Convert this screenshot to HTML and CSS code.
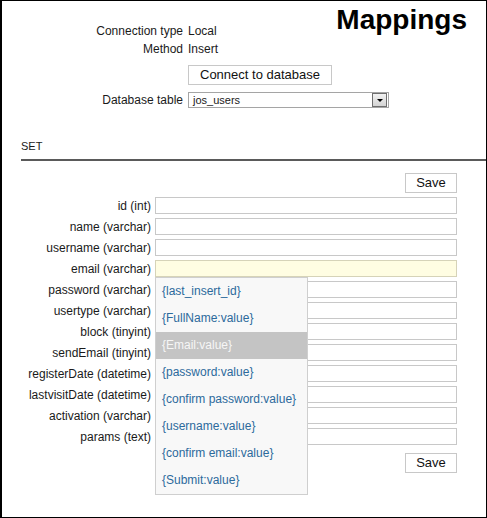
FILE: index.html
```html
<!DOCTYPE html>
<html>
	<head>
		<meta charset="utf-8">
		<title>Mappings</title>
		<link rel="stylesheet" href="styles.css">
	</head>
	<body>
		<div id="frame">
			<div class="head">
				<h1 class="title">Mappings</h1>
				<div class="info">
					<div class="row"><span class="lbl">Connection type</span><span class="val">Local</span></div>
					<div class="row"><span class="lbl">Method</span><span class="val">Insert</span></div>
					<div class="row btn-row"><span class="lbl"></span><button class="btn connect">Connect to database</button></div>
					<div class="row sel-row">
						<span class="lbl">Database table</span>
						<div class="select">
							<span class="sel-text">jos_users</span>
							<span class="sel-arrow"></span>
						</div>
					</div>
				</div>
			</div>

			<div class="set">SET</div>
			<div class="rule"></div>

			<div class="map">
				<div class="save-row"><button class="btn save">Save</button></div>
				<div class="field"><label>id (int)</label><input type="text"></div>
				<div class="field"><label>name (varchar)</label><input type="text"></div>
				<div class="field"><label>username (varchar)</label><input type="text"></div>
				<div class="field"><label>email (varchar)</label><input type="text" class="focus">
					<ul class="suggest">
						<li>{last_insert_id}</li>
						<li>{FullName:value}</li>
						<li class="on">{Email:value}</li>
						<li>{password:value}</li>
						<li>{confirm password:value}</li>
						<li>{username:value}</li>
						<li>{confirm email:value}</li>
						<li>{Submit:value}</li>
					</ul>
				</div>
				<div class="field"><label>password (varchar)</label><input type="text"></div>
				<div class="field"><label>usertype (varchar)</label><input type="text"></div>
				<div class="field"><label>block (tinyint)</label><input type="text"></div>
				<div class="field"><label>sendEmail (tinyint)</label><input type="text"></div>
				<div class="field"><label>registerDate (datetime)</label><input type="text"></div>
				<div class="field"><label>lastvisitDate (datetime)</label><input type="text"></div>
				<div class="field"><label>activation (varchar)</label><input type="text"></div>
				<div class="field"><label>params (text)</label><input type="text"></div>
				<div class="save-row bottom"><button class="btn save">Save</button></div>
			</div>
		</div>
	</body>
</html>
```

FILE: styles.css
```css
* {
	margin: 0;
	padding: 0;
	box-sizing: border-box;
}
body {
	font-family: "Liberation Sans", Arial, sans-serif;
	font-size: 12px;
	color: #1a1a1a;
	background: #fff;
}
#frame {
	width: 487px;
	height: 518px;
	border: 1px solid #000;
	border-left-width: 2px;
	overflow: hidden;
}

/* header */
.title {
	float: right;
	margin: 3px 19px 0 0;
	font-size: 28px;
	line-height: 32px;
	font-weight: bold;
	color: #000;
}
.info {
	padding-top: 21px;
}
.row {
	display: flex;
	align-items: center;
	height: 18px;
}
.lbl {
	width: 181px;
	flex: none;
	text-align: right;
	margin-right: 5px;
}
.btn-row {
	height: 20px;
	margin-top: 7px;
}
.btn {
	font-family: "Liberation Sans", Arial, sans-serif;
	font-size: 13px;
	color: #111;
	background: #fff;
	border: 1px solid #c8c8c8;
	height: 20px;
	line-height: 18px;
}
.connect {
	width: 144px;
}
.sel-row {
	height: 22px;
	margin-top: 4px;
}
.select {
	width: 201px;
	height: 16px;
	border: 1px solid #a5a5a5;
	display: flex;
	align-items: center;
	justify-content: space-between;
	padding: 0 1px 0 4px;
	font-size: 11px;
}
.sel-arrow {
	width: 15px;
	height: 14px;
	border: 1px solid #6e6e6e;
	background: linear-gradient(#f2f2f2, #d4d4d4);
	position: relative;
}
.sel-arrow:after {
	content: "";
	position: absolute;
	left: 4px;
	top: 5px;
	border-left: 3px solid transparent;
	border-right: 3px solid transparent;
	border-top: 3px solid #000;
}

/* set */
.set {
	clear: both;
	font-size: 11px;
	line-height: 14px;
	padding-left: 19px;
	margin-top: 28px;
}
.rule {
	height: 2px;
	margin: 6px 0 0 19px;
	background: #5a5a5a;
}

/* mapping rows */
.map {
	padding-top: 12px;
}
.save-row {
	display: flex;
	justify-content: flex-end;
	width: 455px;
	margin-bottom: 4px;
}
.save-row.bottom {
	margin: 8px 0 0;
}
.save {
	width: 52px;
}
.field {
	display: flex;
	align-items: center;
	height: 17px;
	margin-bottom: 4px;
	position: relative;
}
.field label {
	width: 149px;
	flex: none;
	text-align: right;
	margin-right: 4px;
}
.field input {
	width: 302px;
	height: 17px;
	border: 1px solid #c8c8c8;
	background: #fff;
	outline: none;
}
.field input.focus {
	background: #fffde2;
	border-color: #d6d3b8;
}

/* autocomplete list over the fields */
.suggest {
	position: absolute;
	left: 153px;
	top: 17px;
	width: 153px;
	border: 1px solid #cfcfcf;
	background: #f8f8f8;
	list-style: none;
	z-index: 2;
}
.suggest li {
	height: 27px;
	line-height: 27px;
	padding-left: 6px;
	color: #2c6a9c;
	white-space: nowrap;
}
.suggest li.on {
	background: #c4c4c4;
	color: #f6f6f6;
}
```
